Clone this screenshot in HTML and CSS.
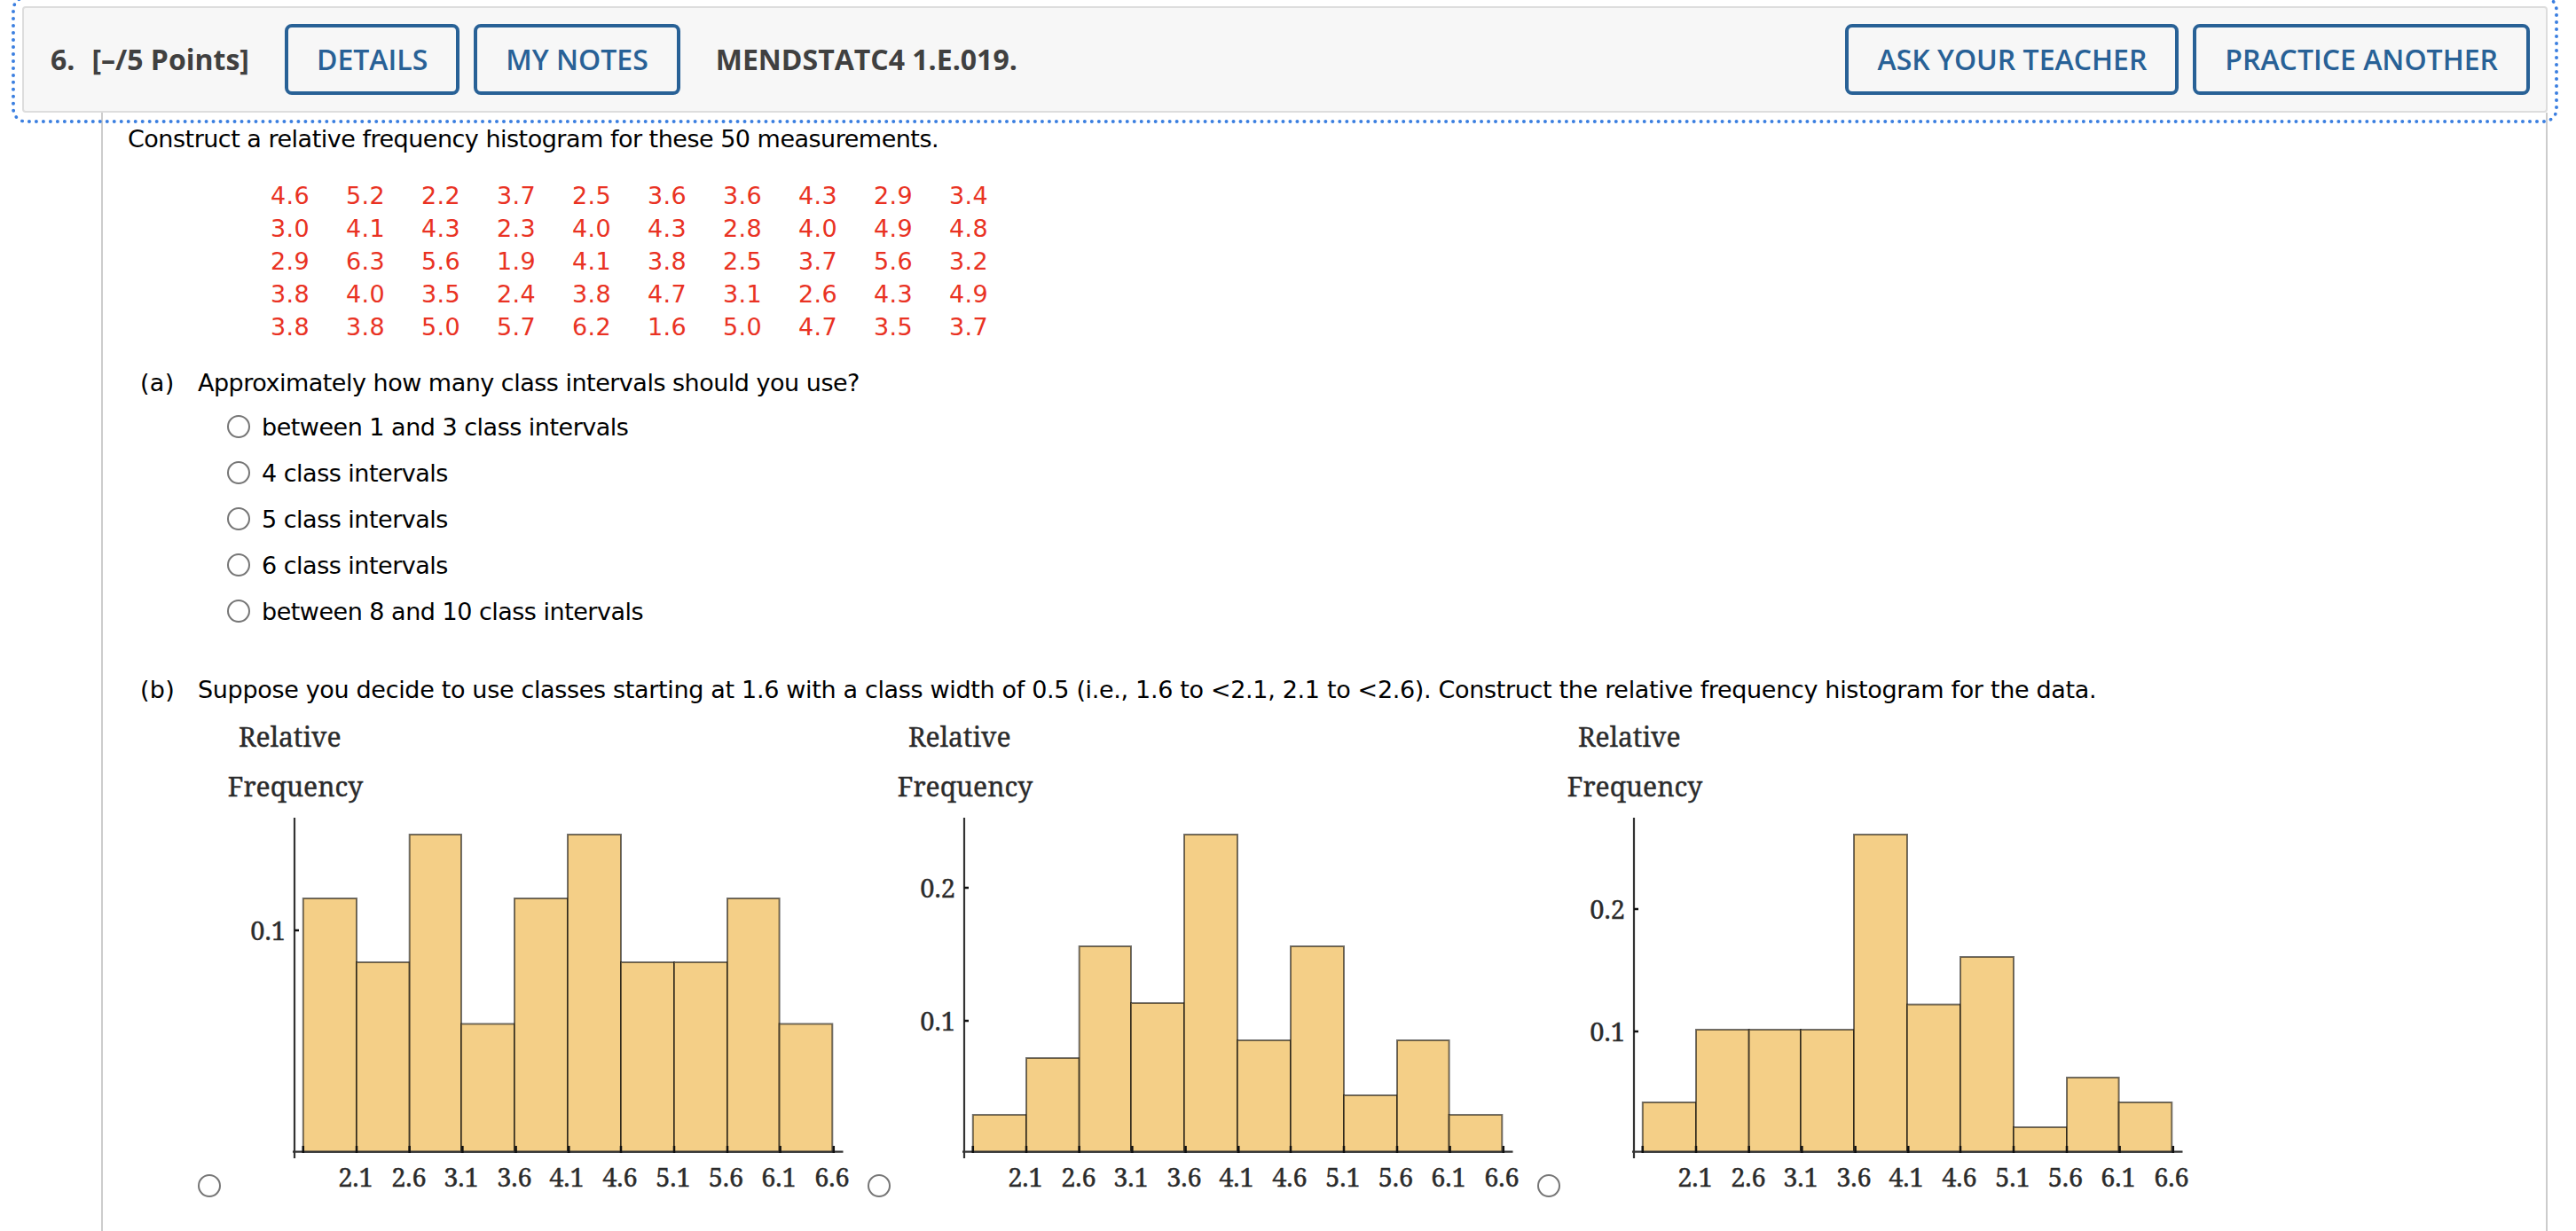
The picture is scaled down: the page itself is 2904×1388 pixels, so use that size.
FILE: index.html
```html
<!DOCTYPE html>
<html lang="en">
<head>
    <meta charset="UTF-8">
    <meta name="viewport" content="width=device-width, initial-scale=1.0">
    <title>MENDSTATC4 1.E.019.</title>
    <link rel="stylesheet" href="styles.css">
</head>
<body>
    <header class="question-header">
        <span class="number">6.</span>
        <span class="points">[–/5 Points]</span>
        <button class="btn">DETAILS</button>
        <button class="btn">MY NOTES</button>
        <span class="code">MENDSTATC4 1.E.019.</span>
        <button class="btn ask">ASK YOUR TEACHER</button>
        <button class="btn">PRACTICE ANOTHER</button>
    </header>
    <main class="question">
        <p class="intro">Construct a relative frequency histogram for these 50 measurements.</p>
        <table class="data">
            <tr><td>4.6</td><td>5.2</td><td>2.2</td><td>3.7</td><td>2.5</td><td>3.6</td><td>3.6</td><td>4.3</td><td>2.9</td><td>3.4</td></tr>
            <tr><td>3.0</td><td>4.1</td><td>4.3</td><td>2.3</td><td>4.0</td><td>4.3</td><td>2.8</td><td>4.0</td><td>4.9</td><td>4.8</td></tr>
            <tr><td>2.9</td><td>6.3</td><td>5.6</td><td>1.9</td><td>4.1</td><td>3.8</td><td>2.5</td><td>3.7</td><td>5.6</td><td>3.2</td></tr>
            <tr><td>3.8</td><td>4.0</td><td>3.5</td><td>2.4</td><td>3.8</td><td>4.7</td><td>3.1</td><td>2.6</td><td>4.3</td><td>4.9</td></tr>
            <tr><td>3.8</td><td>3.8</td><td>5.0</td><td>5.7</td><td>6.2</td><td>1.6</td><td>5.0</td><td>4.7</td><td>3.5</td><td>3.7</td></tr>
        </table>

        <section class="part">
            <span class="letter">(a)</span>
            <div>
                <p>Approximately how many class intervals should you use?</p>
                <div class="choices">
                    <label><input type="radio" name="a">between 1 and 3 class intervals</label>
                    <label><input type="radio" name="a">4 class intervals</label>
                    <label><input type="radio" name="a">5 class intervals</label>
                    <label><input type="radio" name="a">6 class intervals</label>
                    <label><input type="radio" name="a">between 8 and 10 class intervals</label>
                </div>
            </div>
        </section>

        <section class="part part-b">
            <span class="letter">(b)</span>
            <div>
                <p class="long">Suppose you decide to use classes starting at 1.6 with a class width of 0.5 (i.e., 1.6 to &lt;2.1, 2.1 to &lt;2.6). Construct the relative frequency histogram for the data.</p>
                <div class="charts">
                    <label class="chart">
                        <input type="radio" name="b">
                        <svg width="720" height="540" viewBox="0 0 720 540">
                            <defs>
                                <!-- axes, ticks and labels shared by the three histograms -->
                                <g id="axes">
                                    <path class="axis" d="M83 112V496M81 488.7H701.5"/>
                                    <path class="tick" d="M92.8 482v8M153 482v8M212.7 482v8M272.4 482v8M332.6 482v8M392.3 482v8M451 482v8M511 482v8M571 482v8M630.6 482v8M690.8 482v8"/>
                                    <text class="title" x="77.7" y="32">Relative</text>
                                    <text class="title" x="84" y="88">Frequency</text>
                                    <g class="labels">
                                        <text x="152" y="528">2.1</text>
                                        <text x="212" y="528">2.6</text>
                                        <text x="271" y="528">3.1</text>
                                        <text x="331" y="528">3.6</text>
                                        <text x="390" y="528">4.1</text>
                                        <text x="450" y="528">4.6</text>
                                        <text x="510" y="528">5.1</text>
                                        <text x="569.5" y="528">5.6</text>
                                        <text x="629" y="528">6.1</text>
                                        <text x="689" y="528">6.6</text>
                                    </g>
                                </g>
                            </defs>
                            <g class="bars">
                                <rect x="92.8" y="203" width="60.2" height="286"/>
                                <rect x="153" y="275" width="59.7" height="214"/>
                                <rect x="212.7" y="131" width="58.3" height="358"/>
                                <rect x="271" y="344.5" width="60" height="144.5"/>
                                <rect x="331" y="203" width="60" height="286"/>
                                <rect x="391" y="131" width="60" height="358"/>
                                <rect x="451" y="275" width="60" height="214"/>
                                <rect x="511" y="275" width="60" height="214"/>
                                <rect x="571" y="203" width="58.6" height="286"/>
                                <rect x="629.6" y="344.5" width="59.7" height="144.5"/>
                            </g>
                            <use href="#axes"/>
                            <path class="tick" d="M83 239h5"/>
                            <text class="freq" x="73" y="249.5">0.1</text>
                        </svg>
                    </label>
                    <label class="chart">
                        <input type="radio" name="b">
                        <svg width="720" height="540" viewBox="0 0 720 540">
                            <g class="bars">
                                <rect x="92.8" y="447" width="60.2" height="42"/>
                                <rect x="153" y="383" width="59.7" height="106"/>
                                <rect x="212.7" y="257" width="58.3" height="232"/>
                                <rect x="271" y="321" width="60" height="168"/>
                                <rect x="331" y="131" width="60" height="358"/>
                                <rect x="391" y="363" width="60" height="126"/>
                                <rect x="451" y="257" width="60" height="232"/>
                                <rect x="511" y="425" width="60" height="64"/>
                                <rect x="571" y="363" width="58.6" height="126"/>
                                <rect x="629.6" y="447" width="59.7" height="42"/>
                            </g>
                            <use href="#axes"/>
                            <path class="tick" d="M83 191h5M83 341h5"/>
                            <text class="freq" x="73" y="201.5">0.2</text>
                            <text class="freq" x="73" y="351.5">0.1</text>
                        </svg>
                    </label>
                    <label class="chart">
                        <input type="radio" name="b">
                        <svg width="720" height="540" viewBox="0 0 720 540">
                            <g class="bars">
                                <rect x="92.8" y="433" width="60.2" height="56"/>
                                <rect x="153" y="351" width="59.7" height="138"/>
                                <rect x="212.7" y="351" width="58.3" height="138"/>
                                <rect x="271" y="351" width="60" height="138"/>
                                <rect x="331" y="131" width="60" height="358"/>
                                <rect x="391" y="322.6" width="60" height="166.4"/>
                                <rect x="451" y="269" width="60" height="220"/>
                                <rect x="511" y="461" width="60" height="28"/>
                                <rect x="571" y="405" width="58.6" height="84"/>
                                <rect x="629.6" y="433" width="59.7" height="56"/>
                            </g>
                            <use href="#axes"/>
                            <path class="tick" d="M83 215h5M83 353h5"/>
                            <text class="freq" x="73" y="226">0.2</text>
                            <text class="freq" x="73" y="364">0.1</text>
                        </svg>
                    </label>
                </div>
            </div>
        </section>
    </main>
</body>
</html>
```
FILE: styles.css
```css
* {
    box-sizing: border-box;
}
body {
    margin: 0;
    padding: 7px 32px 0 25px;
    height: 1388px;
    overflow: hidden;
    background-color: white;
    color: black;
    font-family: Verdana, "DejaVu Sans", sans-serif;
    font-size: 27px;
    line-height: 36px;
    letter-spacing: -0.5px;
    display: flex;
    flex-direction: column;
}
p {
    margin: 0;
}
.question-header {
    position: relative;
    display: flex;
    flex: none;
    align-items: center;
    height: 120px;
    padding: 0 18px 0 30px;
    background-color: #f7f7f7;
    border: 2px solid #ddd;
    border-radius: 4px;
    outline: 4px dotted #3b7fe0;
    outline-offset: 8px;
    color: #404040;
    font-family: "Open Sans", sans-serif;
    font-size: 32px;
    font-weight: 700;
    letter-spacing: 0;
}
.points {
    margin: 0 40px 0 19px;
}
.btn {
    height: 80px;
    padding: 0 32px;
    margin: 0;
    background: none;
    border: 4px solid #286196;
    border-radius: 8px;
    color: #286196;
    font: inherit;
    font-weight: 600;
    white-space: nowrap;
}
.btn + .btn {
    margin-left: 16px;
}
.code {
    margin-left: 40px;
}
.ask {
    margin-left: auto;
}
.question {
    flex: 1;
    margin-left: 89px;
    padding: 12px 0 0 29px;
    border: solid #ccc;
    border-width: 0 2px;
    overflow: hidden;
}
.intro {
    margin-left: -1px;
}
.data {
    margin: 27px 0 0 160px;
    border-collapse: collapse;
    color: #e93223;
    letter-spacing: 0.4px;
}
.data td {
    width: 85px;
    height: 37px;
    padding: 0;
}
.part {
    display: flex;
    margin: 27px 0 0 13px;
}
.letter {
    width: 65px;
    flex: none;
    letter-spacing: 0.3px;
}
.choices {
    padding: 14px 0 0 33px;
}
.choices label {
    display: flex;
    align-items: center;
    height: 36px;
    margin-bottom: 16px;
}
input[type="radio"] {
    appearance: none;
    flex: none;
    width: 26px;
    height: 26px;
    margin: 0;
    border: 2px solid #767676;
    border-radius: 50%;
    background-color: white;
}
.choices input[type="radio"] {
    margin: -3px 13px 0 0;
}
.part-b {
    margin-top: 36px;
}
.long {
    letter-spacing: -0.33px;
}
.charts {
    display: flex;
    padding-top: 14px;
}
.chart {
    display: flex;
    align-items: flex-end;
    width: 755px;
    flex: none;
}
.chart svg {
    display: block;
    flex: none;
}
.chart text {
    fill: #2b2b2b;
    stroke: #2b2b2b;
    stroke-width: 0.4;
    font-family: "Noto Serif", "DejaVu Serif Condensed", serif;
    letter-spacing: 0;
}
.title {
    font-size: 30px;
    text-anchor: middle;
}
.labels text {
    font-size: 29px;
    text-anchor: middle;
}
.freq {
    font-size: 29px;
    text-anchor: end;
}
.bars rect {
    fill: #f4cf87;
    stroke: #000;
    stroke-opacity: 0.55;
    stroke-width: 2;
}
.axis {
    fill: none;
    stroke: #333;
    stroke-width: 2.2;
}
.tick {
    fill: none;
    stroke: #111;
    stroke-width: 2.5;
}
```
